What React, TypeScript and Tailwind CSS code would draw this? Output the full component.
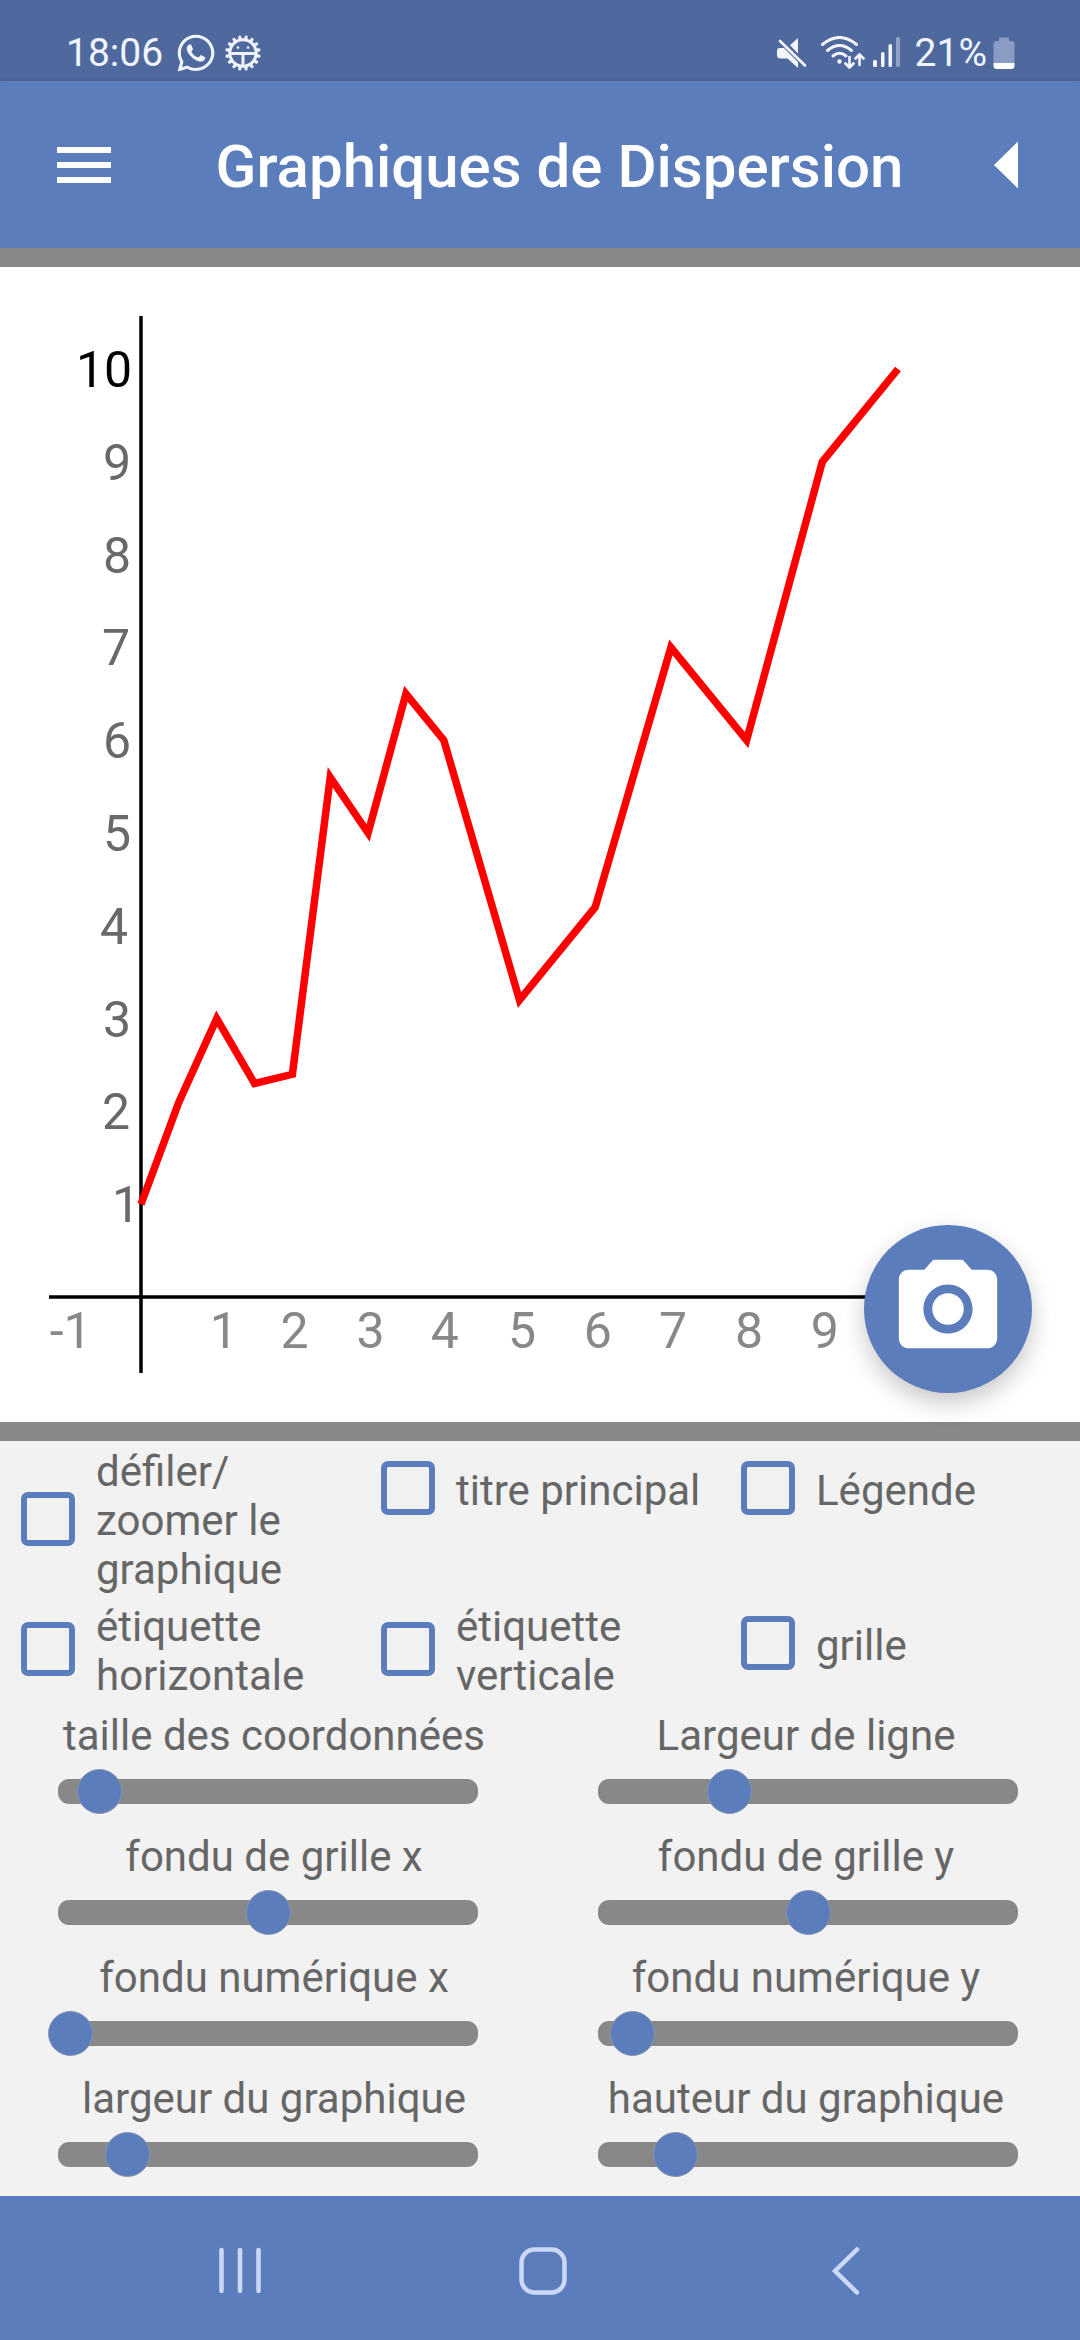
import React from 'react';
import { FaWhatsapp } from 'react-icons/fa';
import { MdPhotoCamera } from 'react-icons/md';

type Point = [number, number];

// Chart geometry, in viewBox units
const ORIGIN_X = 141;
const ORIGIN_Y = 1030;
const UNIT_X = 75.7;
const UNIT_Y = 92.8;

const points: Point[] = [
  [0, 1], [0.5, 2.1], [1, 3], [1.5, 2.3], [2, 2.4], [2.5, 5.6], [3, 5], [3.5, 6.5],
  [4, 6], [5, 3.2], [6, 4.2], [7, 7], [8, 6], [9, 9], [10, 10],
];

// Inked width of each axis label, used to place it against its tick
const inkWidth: Record<string, number> = {
  '-1': 31, '1': 14, '2': 24, '3': 23, '4': 26, '5': 23, '6': 23, '7': 24, '8': 23, '9': 23, '10': 50,
};

const xLabels = ['-1', '1', '2', '3', '4', '5', '6', '7', '8', '9'];
const yLabels = ['1', '2', '3', '4', '5', '6', '7', '8', '9', '10'];

const options = [
  { id: 'scroll', label: 'défiler/ zoomer le graphique' },
  { id: 'title', label: 'titre principal' },
  { id: 'legend', label: 'Légende' },
  { id: 'xlabel', label: 'étiquette horizontale' },
  { id: 'ylabel', label: 'étiquette verticale' },
  { id: 'grid', label: 'grille' },
];

const sliders = [
  { id: 'coord-size', label: 'taille des coordonnées', value: 74 },
  { id: 'line-width', label: 'Largeur de ligne', value: 300 },
  { id: 'grid-fade-x', label: 'fondu de grille x', value: 500 },
  { id: 'grid-fade-y', label: 'fondu de grille y', value: 500 },
  { id: 'num-fade-x', label: 'fondu numérique x', value: 0 },
  { id: 'num-fade-y', label: 'fondu numérique y', value: 56 },
  { id: 'chart-width', label: 'largeur du graphique', value: 144 },
  { id: 'chart-height', label: 'hauteur du graphique', value: 164 },
];

const GearIcon = () => {
  const teeth = Array.from({ length: 16 }, (_, i) => i * 22.5 + 11.25);
  return (
    <svg viewBox="0 0 36 36" className="size-9" aria-hidden="true">
      <g stroke="#eef3ff" strokeWidth="3.2" strokeLinecap="round">
        {teeth.map((angle) => (
          <path key={angle} d="M18 3.5V1.7" transform={`rotate(${angle} 18 18)`} />
        ))}
      </g>
      <circle cx="18" cy="18" r="13.2" fill="none" stroke="#eef3ff" strokeWidth="3" />
      <path d="M5 18.4H31M18 18.4V31" stroke="#eef3ff" strokeWidth="3" />
      <circle cx="13" cy="12.6" r="1.3" fill="#eef3ff" />
      <circle cx="23" cy="12.6" r="1.3" fill="#eef3ff" />
    </svg>
  );
};

const MuteIcon = () => (
  <svg viewBox="0 0 30 30" className="size-[30px]" aria-hidden="true" fill="#f4f6fc">
    <path d="M21 0V15.5L13 7.2ZM2.5 10H7L21 24V30L10.5 20.5H3.5Q0 20.5 0 17V13Q0 10 2.5 10Z" />
    <path d="M3 3L28 27.5" stroke="#f4f6fc" strokeWidth="2.6" strokeLinecap="round" />
  </svg>
);

const WifiIcon = () => (
  <svg viewBox="0 0 44 34" className="h-[34px] w-[44px]" aria-hidden="true" fill="none" stroke="#f4f6fc" strokeLinecap="round">
    <path d="M1.5 8.5Q18.5 -5.5 35.5 8.5" strokeWidth="3" />
    <path d="M6.5 14.5Q18.5 4.5 30.5 14.5" strokeWidth="3" />
    <path d="M12 20Q18.5 14.5 25 20" strokeWidth="3" />
    <circle cx="18.5" cy="25.5" r="2.2" fill="#f4f6fc" stroke="none" />
    <path d="M28.5 21V31M24.5 27.5L28.5 31.5L32.5 27.5M38.5 29V19M34.5 22.5L38.5 18.5L42.5 22.5" strokeWidth="2.6" strokeLinejoin="round" />
  </svg>
);

const SignalIcon = () => (
  <svg viewBox="0 0 28 32" className="h-8 w-7" aria-hidden="true" fill="#f4f6fc">
    <rect x="0" y="23" width="4" height="7" rx="1.5" />
    <rect x="8" y="15" width="3.5" height="15" rx="1.5" />
    <rect x="15.5" y="7" width="3.5" height="23" rx="1.5" />
    <rect x="23" y="0" width="4" height="30" rx="1.5" opacity="0.4" />
  </svg>
);

const BatteryIcon = () => (
  <svg viewBox="0 0 22 32" className="h-8 w-[22px]" aria-hidden="true">
    <path d="M6 0.5H16V4H18Q21.5 4 21.5 8V26H0.5V8Q0.5 4 4 4H6Z" fill="#8b9cc4" />
    <path d="M0.5 26H21.5V29Q21.5 32 18.5 32H3.5Q0.5 32 0.5 29Z" fill="#fff" />
  </svg>
);

const StatusBar = () => (
  <div className="flex h-[81px] items-end justify-between bg-[#4f699e] pr-[65px] pb-[7px] pl-[66px] text-[39px] leading-[42px] text-[#f1f5ff]">
    <div className="flex items-center">
      <span>18:06</span>
      <FaWhatsapp className="ml-3 size-[42px]" aria-hidden="true" />
      <span className="ml-2">
        <GearIcon />
      </span>
    </div>
    <div className="flex items-center">
      <MuteIcon />
      <span className="ml-3.5">
        <WifiIcon />
      </span>
      <span className="ml-2">
        <SignalIcon />
      </span>
      <span className="ml-3.5">21%</span>
      <span className="ml-1.5">
        <BatteryIcon />
      </span>
    </div>
  </div>
);

const AppHeader = () => (
  <header className="relative flex h-[167px] items-center bg-[#5c7dbc] pr-[62px] pl-[57px] text-white shadow-[0_2px_6px_rgba(0,0,0,0.35)]">
    <button type="button" aria-label="Menu" className="flex w-[54px] flex-col gap-[9px]">
      <span className="h-1.5 bg-white" />
      <span className="h-1.5 bg-white" />
      <span className="h-1.5 bg-white" />
    </button>
    <h1 className="flex-1 pt-1 pl-3.5 text-center text-[60px] leading-[70px] font-medium">Graphiques de Dispersion</h1>
    <button type="button" aria-label="Retour">
      <svg viewBox="0 0 24 48" className="h-12 w-6" fill="#fff" aria-hidden="true">
        <path d="M24 0.5V47.5L0 24Z" />
      </svg>
    </button>
  </header>
);

const Chart = () => {
  const line = points.map(([x, y]) => `${ORIGIN_X + x * UNIT_X},${ORIGIN_Y - y * UNIT_Y}`).join(' ');
  return (
    <svg viewBox="0 0 1080 1155" className="block h-auto w-full text-[50px]" role="img" aria-label="Graphique de dispersion">
      <path d={`M${ORIGIN_X} 49V1106M49 ${ORIGIN_Y}H1031`} stroke="#000" strokeWidth="3.5" />
      {yLabels.map((label) => (
        <text
          key={label}
          x={126 - inkWidth[label]}
          y={ORIGIN_Y - Number(label) * UNIT_Y + 18}
          fill={label === '10' ? '#000' : '#696969'}
        >
          {label}
        </text>
      ))}
      {xLabels.map((label) => (
        <text key={label} x={ORIGIN_X + Number(label) * UNIT_X - inkWidth[label] / 2} y={ORIGIN_Y + 51} fill="#888">
          {label}
        </text>
      ))}
      <polyline points={line} fill="none" stroke="#f00" strokeWidth="7.5" />
    </svg>
  );
};

const Checkbox = ({ id, label }: { id: string; label: string }) => (
  <label htmlFor={id} className="flex min-h-[86px] items-center gap-[21px] pr-2 pl-[21px]">
    <input
      id={id}
      type="checkbox"
      className="mb-1 size-[54px] shrink-0 appearance-none rounded-[7px] border-6 border-[#5c7dbc] checked:bg-[#5c7dbc]"
    />
    <span>{label}</span>
  </label>
);

const Slider = ({ id, label, value }: { id: string; label: string; value: number }) => (
  <div className="group pr-[62px] pl-[58px]">
    <label htmlFor={id} className="block text-center whitespace-nowrap group-odd:-mr-3 group-even:-ml-1">
      {label}
    </label>
    <div className="mt-[19px] mb-7 flex h-[25px] items-center rounded-[11px] bg-[#888]">
      <input
        id={id}
        type="range"
        min={0}
        max={1000}
        defaultValue={value}
        className="-mx-2.5 h-[45px] w-[calc(100%+20px)] shrink-0 appearance-none bg-transparent [&::-webkit-slider-thumb]:size-[45px] [&::-webkit-slider-thumb]:appearance-none [&::-webkit-slider-thumb]:rounded-full [&::-webkit-slider-thumb]:border [&::-webkit-slider-thumb]:border-solid [&::-webkit-slider-thumb]:border-[#8593b0] [&::-webkit-slider-thumb]:bg-[#5c7dbc]"
      />
    </div>
  </div>
);

const NavBar = () => (
  <nav className="grid h-36 grid-cols-3 bg-[#5c7dbc] pt-1.5 pr-[83px] pl-[89px]">
    <button type="button" aria-label="Applications récentes" className="flex items-center justify-center">
      <svg viewBox="0 0 48 48" className="size-12" stroke="#cbd9f7" strokeWidth="4.5" strokeLinecap="round" aria-hidden="true">
        <path d="M5.5 3V44M24 3V44M42.5 3V44" />
      </svg>
    </button>
    <button type="button" aria-label="Accueil" className="flex items-center justify-center">
      <svg viewBox="0 0 48 48" className="size-12" fill="none" stroke="#cbd9f7" strokeWidth="4.5" aria-hidden="true">
        <rect x="2.5" y="2.5" width="43" height="43" rx="13" />
      </svg>
    </button>
    <button type="button" aria-label="Précédent" className="flex items-center justify-center">
      <svg viewBox="0 0 48 48" className="size-12" fill="none" stroke="#cbd9f7" strokeWidth="4.5" strokeLinecap="round" aria-hidden="true">
        <path d="M35 2.5L13 24L35 45.5" />
      </svg>
    </button>
  </nav>
);

const App: React.FC = () => {
  return (
    <div className="flex min-h-screen flex-col bg-[#f2f2f2] font-[Roboto,sans-serif] text-[#666]">
      <StatusBar />
      <AppHeader />

      <main className="flex flex-1 flex-col">
        {/* Chart */}
        <section className="relative border-y-[19px] border-[#888] bg-white">
          <Chart />
          <button
            type="button"
            aria-label="Prendre une photo"
            className="absolute right-12 bottom-[29px] flex size-[168px] items-center justify-center rounded-full bg-[#5c7dbc] text-white shadow-[0_10px_24px_rgba(0,0,0,0.22)]"
          >
            <MdPhotoCamera className="size-[118px]" />
          </button>
        </section>

        {/* Display options */}
        <section className="flex-1 pt-1.5 text-[42px] leading-[49px]">
          <div className="grid grid-cols-3 items-start gap-y-2">
            {options.map((option) => (
              <Checkbox key={option.id} {...option} />
            ))}
          </div>
          <div className="mt-[11px] grid grid-cols-2">
            {sliders.map((slider) => (
              <Slider key={slider.id} {...slider} />
            ))}
          </div>
        </section>
      </main>

      <NavBar />
    </div>
  );
};

export default App;
